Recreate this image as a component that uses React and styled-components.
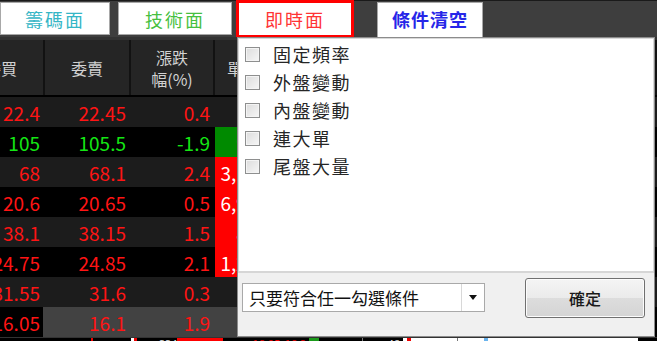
import styled, { createGlobalStyle } from 'styled-components';

const GlobalStyle = createGlobalStyle`
    html, body {
        margin: 0;
        padding: 0;
        background: #3c3c3c;
    }
    body {
        font-family: "Noto Sans CJK TC", "Noto Sans", sans-serif;
    }
`;

const RED = '#ff1414';
const GREEN = '#14e614';

const rows = [
    { buy: '22.4', sell: '22.45', pct: '0.4', vol: '', color: RED },
    { buy: '105', sell: '105.5', pct: '-1.9', vol: '912', color: GREEN, fill: '#008a00', volColor: '#2bd42b' },
    { buy: '68', sell: '68.1', pct: '2.4', vol: '3,125', color: RED, fill: '#ff0000' },
    { buy: '20.6', sell: '20.65', pct: '0.5', vol: '6,950', color: RED, fill: '#ff0000' },
    { buy: '38.1', sell: '38.15', pct: '1.5', vol: '812', color: RED, fill: '#ff0000' },
    { buy: '24.75', sell: '24.85', pct: '2.1', vol: '1,204', color: RED, fill: '#ff0000' },
    { buy: '31.55', sell: '31.6', pct: '0.3', vol: '156', color: RED, volColor: '#5a1010' },
    { buy: '16.05', sell: '16.1', pct: '1.9', vol: '', color: RED, selected: true },
];

const options = ['固定頻率', '外盤變動', '內盤變動', '連大單', '尾盤大量'];

export default function App() {
    return (
        <>
            <GlobalStyle />
            <Screen>
                <TopBar>
                    <Tab $color="#35b6c6">籌碼面</Tab>
                    <Tab $color="#46c040" $gap={8} $width={114}>技術面</Tab>
                    <ActiveTab>即時面</ActiveTab>
                    <ClearTab>條件清空</ClearTab>
                </TopBar>
                <Body>
                    <Table>
                        <HeaderRow>
                            <HeadCell>委買</HeadCell>
                            <HeadCell>委賣</HeadCell>
                            <HeadCell>漲跌<br />幅(%)</HeadCell>
                            <HeadCell>單量</HeadCell>
                            <HeadCell>成交</HeadCell>
                        </HeaderRow>
                        {rows.map((r, i) => (
                            <Row key={i} $dark={i % 2 === 1}>
                                <Cell $color={r.color}>{r.buy}</Cell>
                                <Cell $color={r.color} $selected={r.selected}>{r.sell}</Cell>
                                <Cell $color={r.color} $selected={r.selected}>{r.pct}</Cell>
                                <VolCell $fill={r.fill} $color={r.volColor || '#fff'} $selected={r.selected}>{r.vol}</VolCell>
                                <Cell $color={r.color} $selected={r.selected}></Cell>
                            </Row>
                        ))}
                    </Table>
                    <BottomStrip>
                        <Seg $w={91} $bg="#000" />
                        <Seg $w={2} $bg="#e00" />
                        <Seg $w={38} $bg="#000" />
                        <Seg $w={3} $bg="#fff" />
                        <Seg $w={3} $bg="#e00" />
                        <Seg $w={22} $bg="#000" />
                        <StripText $w={18} $color="#ddd">334</StripText>
                        <Seg $w={46} $bg="#ff0000" />
                        <StripText $w={60} $color="#e00">16.05</StripText>
                        <StripText $w={26} $color="#e00">16.2</StripText>
                        <Seg $w={10} $bg="#1a9a1a" />
                        <Seg $w={43} $bg="#000" />
                        <Seg $w={1} $bg="#777" />
                        <StripText $w={40} $color="#ddd">48</StripText>
                        <Seg $w={4} $bg="#fff" />
                        <Seg $w={4} $bg="#e00" />
                        <Seg $w={46} $bg="#fff" />
                        <Seg $w={1} $bg="#777" />
                        <Seg $w={26} $bg="#fff" />
                        <Seg $w={4} $bg="#6ab4ee" />
                        <Seg $w={150} $bg="#fff" />
                    </BottomStrip>
                    <Popup>
                        <OptionList>
                            {options.map((o) => (
                                <OptionRow key={o}>
                                    <CheckBox />
                                    <OptionLabel>{o}</OptionLabel>
                                </OptionRow>
                            ))}
                        </OptionList>
                        <Footer>
                            <Select>
                                <SelectText>只要符合任一勾選條件</SelectText>
                                <SelectArrow>
                                    <svg width="8" height="5" viewBox="0 0 8 5">
                                        <path d="M0 0 H8 L4 5 Z" fill="#111" />
                                    </svg>
                                </SelectArrow>
                            </Select>
                            <OkButton>確定</OkButton>
                        </Footer>
                    </Popup>
                </Body>
            </Screen>
        </>
    );
}

const Screen = styled.div`
    width: 657px;
    height: 341px;
    overflow: hidden;
    background: #3c3c3c;
    display: flex;
    flex-direction: column;
`;

const TopBar = styled.div`
    height: 37px;
    flex: none;
    display: flex;
    align-items: flex-start;
    background: #3e3e3e;
    border-top: 1px solid #1a1a1a;
    box-sizing: border-box;
`;

const Tab = styled.div`
    box-sizing: border-box;
    margin-top: 1px;
    margin-left: ${(p) => p.$gap || 0}px;
    width: ${(p) => p.$width || 110}px;
    height: 33px;
    background: #fff;
    border: 1px solid #a8a8a8;
    color: ${(p) => p.$color};
    font-size: 18px;
    letter-spacing: 2px;
    display: flex;
    align-items: center;
    justify-content: center;
`;

const ActiveTab = styled.div`
    box-sizing: border-box;
    margin-top: -1px;
    margin-left: 4px;
    width: 118px;
    height: 38px;
    background: #fff;
    border: 3px solid #ff0000;
    color: #ff3434;
    font-size: 18px;
    letter-spacing: 2px;
    display: flex;
    align-items: center;
    justify-content: center;
`;

const ClearTab = styled.div`
    box-sizing: border-box;
    margin-top: 1px;
    margin-left: 23px;
    width: 106px;
    height: 35px;
    background: #fff;
    border: 1px solid #a8a8a8;
    border-bottom: none;
    color: #2626e8;
    font-weight: 700;
    font-size: 18px;
    letter-spacing: 1px;
    display: flex;
    align-items: center;
    justify-content: center;
    padding-bottom: 2px;
`;

const Body = styled.div`
    position: relative;
    flex: 1;
    display: flex;
    flex-direction: column;
    background: #333;
`;

const Table = styled.div`
    margin-top: 3px;
    margin-left: -41px;
    display: flex;
    flex-direction: column;
    background: #000;
`;

const HeaderRow = styled.div`
    display: grid;
    grid-template-columns: 84px 84px 82px 56px 82px;
    column-gap: 2px;
    height: 55px;
    margin-bottom: 2px;
    background: #121212;
`;

const HeadCell = styled.div`
    background: #252525;
    color: #d2d2d2;
    font-size: 16px;
    line-height: 22px;
    display: flex;
    align-items: center;
    justify-content: center;
    text-align: center;
`;

const Row = styled.div`
    display: grid;
    grid-template-columns: 84px 84px 82px 56px 82px;
    column-gap: 2px;
    height: 30px;
    background: ${(p) => (p.$dark ? '#000' : '#1c1c1c')};
`;

const Cell = styled.div`
    color: ${(p) => p.$color};
    background: ${(p) => (p.$selected ? '#424242' : 'transparent')};
    margin-left: ${(p) => (p.$selected ? '-2px' : '0')};
    padding-left: ${(p) => (p.$selected ? '2px' : '0')};
    font-size: 19px;
    padding-right: 3px;
    display: flex;
    align-items: center;
    justify-content: flex-end;
    white-space: nowrap;
`;

const VolCell = styled(Cell)`
    background: ${(p) => p.$fill || (p.$selected ? '#424242' : 'transparent')};
`;

const BottomStrip = styled.div`
    margin-top: 1px;
    height: 3px;
    display: flex;
    overflow: hidden;
    background: #000;
`;

const Seg = styled.div`
    flex: none;
    width: ${(p) => p.$w}px;
    background: ${(p) => p.$bg};
`;

const StripText = styled.div`
    flex: none;
    width: ${(p) => p.$w}px;
    color: ${(p) => p.$color};
    font-size: 11px;
    line-height: 11px;
    text-align: right;
    padding-right: 3px;
    box-sizing: border-box;
`;

const Popup = styled.div`
    position: absolute;
    left: 237px;
    top: 0;
    width: 418px;
    height: 300px;
    box-sizing: border-box;
    background: #fff;
    border: 1px solid #8c8c8c;
    box-shadow: inset 0 0 0 1px #d8d8d8;
    display: flex;
    flex-direction: column;
`;

const OptionList = styled.div`
    flex: 1;
    padding: 2px 0 0 7px;
`;

const OptionRow = styled.div`
    height: 28px;
    display: flex;
    align-items: center;
    gap: 13px;
`;

const CheckBox = styled.div`
    width: 15px;
    height: 15px;
    box-sizing: border-box;
    border: 1px solid #8e8f8f;
    background: linear-gradient(135deg, #dcdcdc, #f6f6f6);
    box-shadow: inset 0 0 0 1px #f4f4f4;
`;

const OptionLabel = styled.span`
    font-size: 18px;
    letter-spacing: 1.5px;
    color: #262626;
`;

const Footer = styled.div`
    height: 63px;
    flex: none;
    background: #f0f0f0;
    border-top: 2px solid #d6d6d6;
    display: flex;
    align-items: flex-start;
    justify-content: space-between;
    padding: 0 9px 0 4px;
`;

const Select = styled.div`
    margin-top: 10px;
    width: 243px;
    height: 29px;
    box-sizing: border-box;
    background: #fff;
    border: 1px solid #a9a9a9;
    display: flex;
`;

const SelectText = styled.div`
    flex: 1;
    padding-left: 6px;
    font-size: 17px;
    color: #111;
    display: flex;
    align-items: center;
`;

const SelectArrow = styled.div`
    width: 22px;
    border-left: 1px solid #d8d8d8;
    display: flex;
    align-items: center;
    justify-content: center;
`;

const OkButton = styled.div`
    margin-top: 5px;
    width: 120px;
    height: 40px;
    box-sizing: border-box;
    border: 1px solid #707070;
    border-radius: 3px;
    background: linear-gradient(#f4f4f4, #ebebeb 50%, #dddddd 50%, #d4d4d4);
    box-shadow: inset 0 0 0 1px #fcfcfc;
    color: #1a1a1a;
    font-size: 16px;
    font-weight: 500;
    display: flex;
    align-items: center;
    justify-content: center;
`;
